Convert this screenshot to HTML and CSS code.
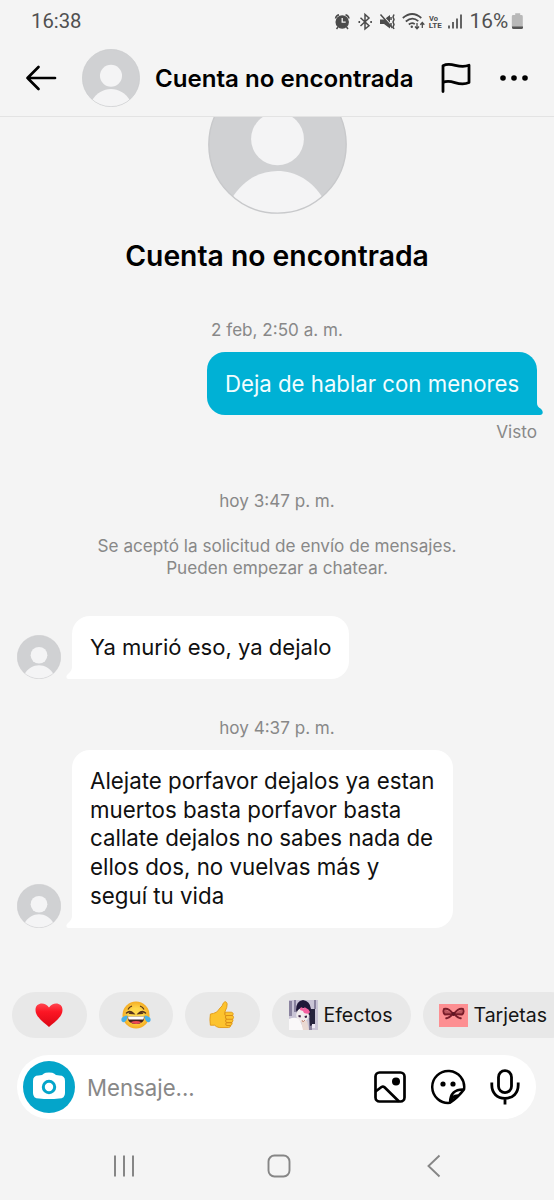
FILE: index.html
```
<!DOCTYPE html>
<html lang="es">
<head>
<meta charset="utf-8">
<title>Cuenta no encontrada</title>
<link rel="stylesheet" href="styles.css">
</head>
<body>
<svg width="0" height="0" class="defs">
  <defs>
    <clipPath id="disc"><circle cx="50" cy="50" r="49.5"/></clipPath>
    <symbol id="avatar" viewBox="0 0 100 100">
      <g clip-path="url(#disc)">
        <rect width="100" height="100" fill="#d0d1d3"/>
        <circle cx="50" cy="46" r="19" fill="#f4f4f5"/>
        <path d="M17 89C25 76 37 69 50 69s25 7 33 20L75 102H25z" fill="#f4f4f5"/>
      </g>
      <circle cx="50" cy="50" r="49.4" fill="none" stroke="#c8c9cb" stroke-width="1"/>
    </symbol>
  </defs>
</svg>
<div class="phone">
  <div class="status">
    <span class="time">16:38</span>
    <div class="indicators">
      <svg width="214" height="26" viewBox="334 8 214 26">
        <g fill="none" stroke="#4b4b4b" stroke-width="1.5">
          <circle cx="342.2" cy="22" r="6" fill="#4b4b4b"/>
          <path d="M335.5 18.5q.5-3 3.5-3.8M345.5 14.7q3 .8 3.500 3.800M338 27l-1.500 2M346.500 27l1.500 2"/>
          <path d="M342.200 18v4.200h3.500" stroke="#f4f4f4" stroke-width="1.300"/>
          <path d="M360.500 17.800l8.500 8-4 3.200V14.500l4 3.500-8.500 8"/>
          <path d="M358.500 22h1.600M370.300 22h1.600" stroke-width="2"/>
          <path d="M380 19.500h4l6-4.500v13.500l-6-4.500h-4z" fill="#4b4b4b" stroke="none"/>
          <path d="M381.500 14.500l12 13" stroke="#f4f4f4" stroke-width="1.200"/>
          <path d="M380.500 14.500l12 13.500" stroke-width="1.500"/>
          <path d="M391 17v3M391 23v3M394 14.500l-1 2.500 1 2.500-1 2.500 1 2.500-1 2.500 1 2" stroke-width="1.500"/>
          <path d="M402.800 18q9.500-8 18.500 0M405.800 21.500q6.500-5.500 12.500-.3M408.800 24.500q3.200-2.500 6-.3" stroke-width="1.700"/>
          <circle cx="411.800" cy="26.800" r="1.200" fill="#4b4b4b" stroke="none"/>
          <path d="M417 23v5.500M415 26.500l2 2.200 2-2.200M422.300 28v-5.500M420.300 24.700l2-2.200 2 2.200" stroke-width="1.300"/>
          <path d="M449 25.500v3M453 22v6.500M457 18.500v10M461 14.500v14" stroke-width="1.700"/>
        </g>
        <text x="429" y="21.300" class="volte">Vo</text>
        <text x="428.800" y="28" class="volte" textLength="13" lengthAdjust="spacingAndGlyphs">LTE</text>
        <text x="469.500" y="28.200" class="pct">16%</text>
        <path d="M513.200 15h2v-1.800h5V15h1.200q1.400 0 1.400 1.400V27h-11V16.400q0-1.400 1.400-1.400z" fill="#b8b8b8"/>
        <path d="M512 26.500h11v1q0 1.500-1.500 1.500H513.500q-1.500 0-1.500-1.500z" fill="#555"/>
      </svg>
    </div>
  </div>

  <header class="topbar">
    <svg class="back" width="32" height="28" viewBox="0 0 32 28"><path d="M14 3.500L3 14.500l11 11M3 14.500h27.500" fill="none" stroke="#000" stroke-width="2.700" stroke-linecap="round" stroke-linejoin="round" transform="translate(-.5 -.5)"/></svg>
    <svg class="avatar-md"><use href="#avatar"/></svg>
    <h1 class="name">Cuenta no encontrada</h1>
    <svg class="flag" width="32" height="32" viewBox="0 0 32 32"><path d="M3 29.500V3.700C12-1 18 7.500 29 3.300V20.500C18 25.500 12 16 3 20.500" fill="none" stroke="#000" stroke-width="2.800" stroke-linecap="round" stroke-linejoin="round"/></svg>
    <svg class="more" width="30" height="8" viewBox="0 0 30 8"><circle cx="4" cy="4" r="2.800"/><circle cx="15" cy="4" r="2.800"/><circle cx="26" cy="4" r="2.800"/></svg>
  </header>

  <main class="chat">
    <div class="profile"><svg class="avatar-lg"><use href="#avatar"/></svg></div>
    <h2 class="profile-name">Cuenta no encontrada</h2>
    <p class="stamp first">2 feb, 2:50 a. m.</p>
    <div class="row out">
      <div class="bubble">Deja de hablar con menores
        <svg class="tail" width="12" height="12" viewBox="0 0 12 12"><path d="M0 0h6q0 3.500 3.500 5.500c3.500 3 2.500 6.500-.5 6.500H0z" fill="#00b1d5"/></svg>
      </div>
    </div>
    <p class="seen">Visto</p>
    <p class="stamp second">hoy 3:47 p. m.</p>
    <p class="notice">Se aceptó la solicitud de envío de mensajes.<br>Pueden empezar a chatear.</p>
    <div class="row in">
      <svg class="avatar-sm"><use href="#avatar"/></svg>
      <div class="bubble short">Ya murió eso, ya dejalo
        <svg class="tail" width="12" height="12" viewBox="0 0 12 12"><path d="M12 0H6q0 3.500-3.500 6.500C-.5 9 0 12 2.500 12H12z" fill="#fff"/></svg>
      </div>
    </div>
    <p class="stamp third">hoy 4:37 p. m.</p>
    <div class="row in">
      <svg class="avatar-sm"><use href="#avatar"/></svg>
      <div class="bubble long">Alejate porfavor dejalos ya estan<br>muertos basta porfavor basta<br>callate dejalos no sabes nada de<br>ellos dos, no vuelvas más y<br>seguí tu vida
        <svg class="tail" width="12" height="12" viewBox="0 0 12 12"><path d="M12 0H6q0 3.500-3.500 6.500C-.5 9 0 12 2.500 12H12z" fill="#fff"/></svg>
      </div>
    </div>
  </main>

  <div class="chips">
    <div class="chip emoji">
      <svg width="28" height="26" viewBox="0 0 28 26"><defs><linearGradient id="red" x2="0" y2="1"><stop offset="0" stop-color="#ff4650"/><stop offset=".35" stop-color="#fc1624"/><stop offset="1" stop-color="#db0715"/></linearGradient></defs><path d="M14 25C10 21 .5 15.500 .5 8 .5.500 10-.5 14 5.500 18-.5 27.500.5 27.500 8 27.500 15.500 18 21 14 25z" fill="url(#red)"/></svg>
    </div>
    <div class="chip emoji">
      <svg width="30" height="28" viewBox="0 0 30 28"><defs><radialGradient id="gold"><stop offset=".5" stop-color="#ffd84b"/><stop offset="1" stop-color="#f5ac23"/></radialGradient></defs><circle cx="15" cy="14" r="13.500" fill="url(#gold)"/><path d="M7 8.500q1-2.500 4-3.500M19 5q3 1 4 3.500" fill="none" stroke="#59351b" stroke-width="1.200"/><path d="M5.500 12q3.500-3 7 .5l-4-.2M24.500 12q-3.500-3-7 .5l4-.2" fill="none" stroke="#59351b" stroke-width="1.600" stroke-linecap="round"/><path d="M6.500 15.500h17q0 7.500-8.500 7.500t-8.500-7.500z" fill="#44221d"/><path d="M7 15.500h16l-.5 3h-15z" fill="#fff"/><path d="M9.500 21.300q5.500-2.500 11 0-5 3.500-11 0z" fill="#ee4853"/><path d="M6.500 14.500C1 15-.5 18 .8 20.200c2 2.500 5.700.3 5.700-5.700zM23.500 14.500c5.500.5 7 3.500 5.700 5.700-2 2.500-5.700.3-5.700-5.700z" fill="#48b0e8"/></svg>
    </div>
    <div class="chip emoji">
      <svg width="26" height="28" viewBox="0 0 28 30"><path d="M1.500 14Q9 13 11 8.500 15 5 15.500 2q3-3 4 1 .5 3-2.500 9h7q3 .5 1.500 3.500 2 2 0 4 1 2-.8 3.500.8 2-1 3Q23 28.500 21 28.500H11Q8 28 6 26H1.500Q.5 20 1.500 14z" fill="#fcc32e" stroke="#e29b18" stroke-width="1"/><path d="M25.500 15.500H19q-3 0-1.500-3.500M25.500 19.500h-6.500q-2.500-2-.3-4M24.700 23.200H19q-2.300-2 0-3.700M23.500 26.200H19q-2-1.300 0-3" fill="none" stroke="#d98d18" stroke-width="1.100"/></svg>
    </div>
    <div class="chip effects">
      <svg width="29" height="30" viewBox="0 0 29 30"><rect width="29" height="30" fill="#c9c4d6"/><path d="M0 1h3v15H0zM5 0h2v12H5zM25 0h2v9h-2zM20 18h3v12h-3z" fill="#8a839f"/><path d="M20 9h6v15l-5 2z" fill="#25233d"/><path d="M7 10Q7 1 14 0q7 1 8 9l-1 6-13-2z" fill="#20183a"/><ellipse cx="13.500" cy="15" rx="6.300" ry="7" fill="#f0ebed"/><path d="M0 19q9-4 12 4l3 7H0z" fill="#faf8f9"/><path d="M12 21l6 0 2 9h-6z" fill="#ead9d3"/><path d="M15 9q-4-4-4 1l3 1 1 2q5 2 6-1-1-3-4-4-2-2-2 1z" fill="#f45fa0"/><path d="M9.500 15l2.500.5-.5 2-2-.5zM15.500 16l2.500-.5v2l-2 .5z" fill="#3c2345"/><path d="M13 20l1 2 2-2" fill="none" stroke="#c58c79"/><path d="M23 24h3v4h-3z" fill="#ece8f3"/></svg>
      <span class="chip-label">Efectos</span>
    </div>
    <div class="chip cards">
      <svg width="29" height="23" viewBox="0 0 29 23"><rect width="29" height="23" fill="#fd8f92"/><path d="M14 9.500Q9 3.500 5 5q-1.500 3.500 1 5.500L14 10zM15 9.500q5-6 9-4.500 1.500 3.500-1 5.500L15 10zM13 10.500q-3 4.500-6.500 3.500M16 10.500q3 4.500 6.500 3.500" fill="none" stroke="#7a1d2a" stroke-width="1.900"/><path d="M5 5l8 4-7 1.500zM24 5l-8 4 7 1.500z" fill="#7a1d2a" fill-opacity=".5"/><circle cx="14.500" cy="10" r="1.900" fill="#5f1522"/></svg>
      <span class="chip-label">Tarjetas</span>
    </div>
  </div>

  <div class="composer">
    <svg class="camera" width="52" height="52" viewBox="0 0 52 52"><circle cx="26" cy="26" r="26" fill="#04a5ca"/><path d="M15.500 14.500l3.500-.5 2-1.500q1-1 5-1t5 1l2 1.500 3.500.5q5.500 0 5.500 5.500V32q0 5.500-6 5.500-10 1-20 0-6 0-6-5.500V20q0-5.500 5.500-5.500z" fill="#fff"/><circle cx="26" cy="26" r="5.700" fill="#fff" stroke="#04a5ca" stroke-width="3"/></svg>
    <span class="placeholder">Mensaje...</span>
    <div class="tools">
      <svg width="32" height="32" viewBox="0 0 32 32"><g fill="none" stroke="#000" stroke-width="2.700" stroke-linejoin="round"><rect x="1.500" y="1.500" width="29" height="29" rx="4"/><path d="M1.500 20.500L7.500 16q1.500-1 3 .3L25 30.500"/></g><circle cx="22" cy="10.500" r="4"/></svg>
      <svg width="36" height="36" viewBox="0 0 36 36"><path d="M20 33.800A16 16 0 1 1 34 20.500Q28 28.500 20 33.800zM20 33.800C20 24.500 25 20 34 20.500M20 33.800C21 28.500 24 26.300 28.500 26.500" fill="none" stroke="#000" stroke-width="2.500" stroke-linejoin="round"/><circle cx="13" cy="15" r="2.600"/><circle cx="23" cy="15" r="2.600"/></svg>
      <svg width="30" height="36" viewBox="0 0 30 36"><g fill="none" stroke="#000" stroke-width="2.800"><rect x="8.500" y="1.700" width="13" height="22" rx="6.500"/><path d="M1.800 13.500V16C1.800 24 7 29.300 15 29.300S28.200 24 28.200 16v-2.500M15 29v6.500"/></g></svg>
    </div>
  </div>

  <nav class="navbar">
    <svg width="22" height="24" viewBox="0 0 22 24"><path d="M2 1.500v21M11 1.500v21M20 1.500v21" stroke="#868686" stroke-width="2"/></svg>
    <svg class="home" width="24" height="24" viewBox="0 0 24 24"><rect x="1.500" y="1.500" width="21" height="21" rx="6" fill="none" stroke="#868686" stroke-width="1.900"/></svg>
    <svg width="14" height="24" viewBox="0 0 14 24"><path d="M12.500 1.500L1.500 12l11 10.500" fill="none" stroke="#868686" stroke-width="1.900"/></svg>
  </nav>
</div>
</body>
</html>
```
FILE: styles.css
```
* { box-sizing: border-box; }
body { margin: 0; background: #f4f4f4; }
h1, h2, p { margin: 0; }
svg { display: block; flex: none; }
.defs { position: absolute; }
.phone {
  width: 554px; height: 1200px; overflow: hidden;
  display: flex; flex-direction: column;
  background: #f4f4f4; color: #101010;
  font-family: Inter, "Liberation Sans", sans-serif;
}
.status { height: 42px; display: flex; justify-content: space-between; padding: 8px 6px 0 31px; }
.time { padding-top: 3px; font: 20.300px/20px Roboto, sans-serif; color: #505050; }
.volte { font: 700 7.500px Roboto, sans-serif; fill: #4b4b4b; }
.pct { font: 20.800px Roboto, sans-serif; fill: #505050; }

.topbar { height: 75px; display: flex; align-items: center; padding: 0 25px 3px 25px; border-bottom: 1px solid #e3e3e3; }
.avatar-md { width: 58px; height: 58px; margin-left: 25px; }
.name { width: 270px; margin: 3px 0 0 15px; font-size: 24.100px; font-weight: 600; line-height: 30px; white-space: nowrap; color: #000; }
.flag { margin-left: 15px; }
.more { margin-left: 27px; }

.chat { height: 875px; overflow: hidden; display: flex; flex-direction: column; }
.profile { height: 97px; display: flex; align-items: flex-end; justify-content: center; overflow: hidden; }
.avatar-lg { width: 139px; height: 139px; }
.profile-name { margin-top: 24px; text-align: center; font-size: 28.300px; line-height: 36px; font-weight: 600; color: #000; white-space: nowrap; }
.stamp { text-align: center; font-size: 17.100px; line-height: 22px; color: #888; }
.first { margin-top: 45px; }
.second { margin-top: 47px; }
.third { margin-top: 38px; margin-bottom: 11px; }
.row { display: flex; align-items: flex-end; }
.bubble { position: relative; padding: 17px 18px; border-radius: 18px; font-size: 22.300px; line-height: 28.700px; white-space: nowrap; }
.out { justify-content: flex-end; padding: 11px 17px 0 0; }
.out .bubble { width: 330px; height: 63px; padding-top: 18px; background: #00b1d5; color: #f2fdff; font-size: 22.200px; border-bottom-right-radius: 0; }
.tail { position: absolute; bottom: 0; }
.out .tail { right: -6px; }
.in { padding-left: 17px; gap: 11px; }
.in .bubble { background: #fff; border-bottom-left-radius: 0; }
.in .tail { left: -6px; }
.in .short { width: 277px; height: 63px; font-size: 22.050px; }
.long { width: 381px; height: 178px; }
.avatar-sm { width: 44px; height: 44px; }
.seen { margin-top: 6px; padding-right: 17px; text-align: right; font-size: 17.200px; line-height: 22px; color: #888; }
.notice { margin: 23px 0 38px; text-align: center; font-size: 17.150px; line-height: 21.500px; color: #888; }

.chips { display: flex; gap: 12px; height: 46px; padding-left: 12px; overflow: hidden; }
.chip { flex: none; height: 46px; display: flex; align-items: center; border-radius: 23px; background: #e8e8e8; }
.emoji { width: 74.500px; justify-content: center; }
.effects { width: 139px; padding-left: 17px; gap: 6px; }
.cards { width: 150px; padding-left: 16px; gap: 6px; }
.chip-label { font-size: 19.500px; line-height: 26px; color: #151515; }

.composer { width: 519px; height: 64px; margin: 17px 0 0 17px; padding: 0 16px 0 6px; display: flex; align-items: center; border-radius: 32px; background: #fff; }
.placeholder { margin-left: 12px; font-size: 22.200px; line-height: 30px; padding-top: 1px; color: #888; }
.tools { margin-left: auto; display: flex; align-items: center; gap: 24px; }
.navbar { flex: 1; display: flex; align-items: center; padding: 13px 112px 0 113px; }
.home { margin-left: 132px; margin-right: 136px; }
```
